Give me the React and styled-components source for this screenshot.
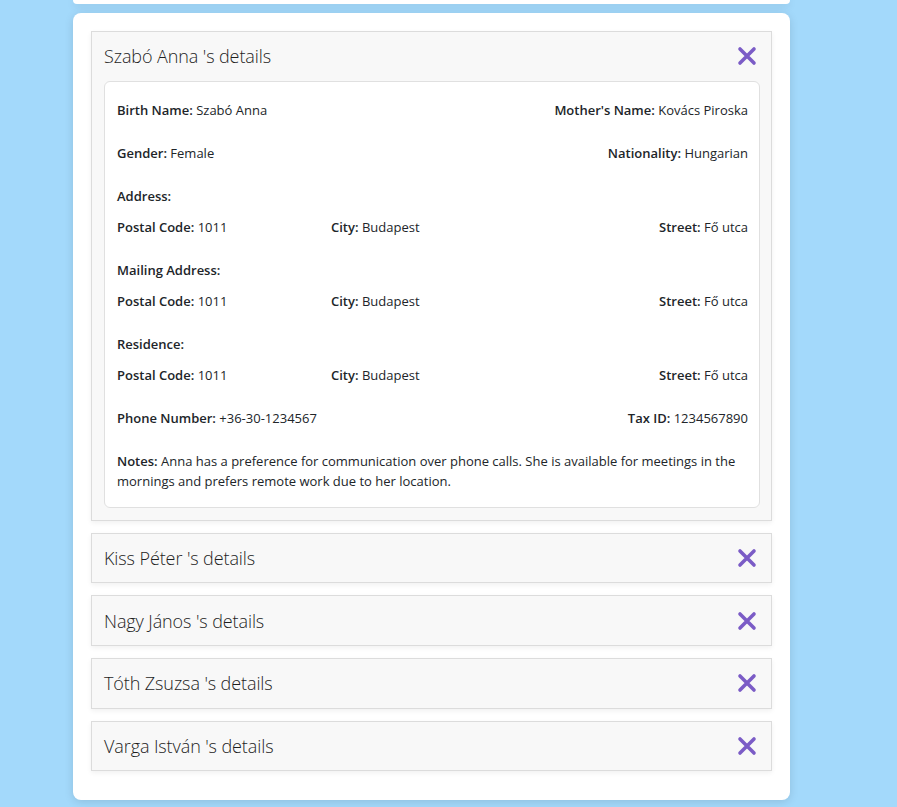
import { useState } from "react";
import styled, { createGlobalStyle } from "styled-components";

const people = [
  {
    name: "Szabó Anna",
    birthName: "Szabó Anna",
    mother: "Kovács Piroska",
    gender: "Female",
    nationality: "Hungarian",
    postal: "1011",
    city: "Budapest",
    street: "Fő utca",
    phone: "+36-30-1234567",
    taxId: "1234567890",
    notes:
      "Anna has a preference for communication over phone calls. She is available for meetings in the mornings and prefers remote work due to her location."
  },
  { name: "Kiss Péter" },
  { name: "Nagy János" },
  { name: "Tóth Zsuzsa" },
  { name: "Varga István" }
];

const CloseIcon = () => (
  <svg width="20" height="20" viewBox="0 0 20 20" fill="none">
    <path d="M3 3 L17 17 M17 3 L3 17" stroke="#7b5cc6" strokeWidth="3.6" strokeLinecap="round" />
  </svg>
);

const Field = ({ label, value }) => (
  <span>
    <Label>{label}:</Label> {value}
  </span>
);

const AddressBlock = ({ title, person }) => (
  <Section>
    <Label>{title}:</Label>
    <ThreeCols>
      <Field label="Postal Code" value={person.postal} />
      <Field label="City" value={person.city} />
      <Right>
        <Field label="Street" value={person.street} />
      </Right>
    </ThreeCols>
  </Section>
);

const Details = ({ person }) => (
  <Panel>
    <TwoCols>
      <Field label="Birth Name" value={person.birthName} />
      <Field label="Mother's Name" value={person.mother} />
    </TwoCols>
    <TwoCols>
      <Field label="Gender" value={person.gender} />
      <Field label="Nationality" value={person.nationality} />
    </TwoCols>
    <AddressBlock title="Address" person={person} />
    <AddressBlock title="Mailing Address" person={person} />
    <AddressBlock title="Residence" person={person} />
    <TwoCols>
      <Field label="Phone Number" value={person.phone} />
      <Field label="Tax ID" value={person.taxId} />
    </TwoCols>
    <Notes>
      <Label>Notes:</Label> {person.notes}
    </Notes>
  </Panel>
);

const App = () => {
  const [openIndex, setOpenIndex] = useState(0);

  return (
    <Page>
      <GlobalStyle />
      <TopCard />
      <Card>
        {people.map((person, i) => (
          <Item key={person.name}>
            <Header>
              <Title>{person.name} 's details</Title>
              <IconButton onClick={() => setOpenIndex(openIndex === i ? -1 : i)}>
                <CloseIcon />
              </IconButton>
            </Header>
            {openIndex === i && person.birthName && <Details person={person} />}
          </Item>
        ))}
      </Card>
    </Page>
  );
};

const GlobalStyle = createGlobalStyle`
  body {
    margin: 0;
    background: #a3d9fb;
    font-family: "Open Sans", "Noto Sans", sans-serif;
    color: #212529;
  }
`;

const Page = styled.div`
  padding: 0 0 20px 73px;
`;

const TopCard = styled.div`
  width: 717px;
  height: 4px;
  background: #fff;
  border-radius: 0 0 8px 8px;
  box-shadow: 0 2px 8px rgba(0, 0, 0, 0.12);
`;

const Card = styled.div`
  width: 717px;
  box-sizing: border-box;
  margin-top: 9px;
  padding: 18px 18px 17px;
  background: #fff;
  border-radius: 8px;
  box-shadow: 0 2px 10px rgba(0, 0, 0, 0.12);
`;

const Item = styled.div`
  background: #f8f8f8;
  border: 1px solid #dcdcdc;
  margin-bottom: 12px;
  box-shadow: 0 2px 5px rgba(0, 0, 0, 0.06);
`;

const Header = styled.div`
  display: flex;
  align-items: center;
  justify-content: space-between;
  height: 48.7px;
  padding: 0 14px 0 12px;
`;

const Title = styled.h3`
  margin: 0;
  font-size: 18px;
  font-weight: 300;
  color: #1e1e1e;
  letter-spacing: -0.1px;
`;

const IconButton = styled.button`
  display: flex;
  padding: 0;
  border: none;
  background: none;
  cursor: pointer;
`;

const Panel = styled.div`
  display: flex;
  flex-direction: column;
  gap: 23px;
  margin: 0 11px 12px 12px;
  padding: 18px 11px 16px 12px;
  background: #fff;
  border: 1px solid #e0e0e0;
  border-radius: 6px;
  font-size: 13px;
  line-height: 20px;
`;

const Label = styled.strong`
  font-weight: 600;
`;

const TwoCols = styled.div`
  display: flex;
  justify-content: space-between;
`;

const Section = styled.div`
  display: flex;
  flex-direction: column;
  gap: 11px;
`;

const ThreeCols = styled.div`
  display: grid;
  grid-template-columns: 214px 1fr 1fr;
`;

const Right = styled.div`
  text-align: right;
`;

const Notes = styled.p`
  margin: 0;
`;

export default App;
